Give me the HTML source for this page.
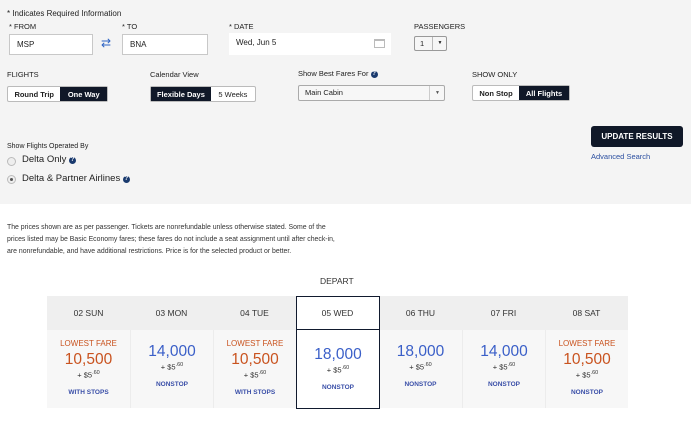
<!DOCTYPE html>
<html><head><style>
body{margin:0;width:691px;height:422px;overflow:hidden;font-family:"Liberation Sans",sans-serif;background:#fff;color:#222;position:relative}
.top{position:absolute;left:0;top:0;width:691px;height:204px;background:#f4f4f4}
.a{position:absolute;white-space:nowrap}
.s9{font-size:8px}
.inp{position:absolute;background:#fff;border:1px solid #c8c8c8;font-size:8px;box-sizing:border-box;padding-left:7px}
.tog{position:absolute;display:flex;border:1px solid #bbb;border-radius:2px;height:16px;box-sizing:border-box;font-size:7.5px;font-weight:bold;background:#fff}
.tog span{display:flex;align-items:center;justify-content:center}
.on{background:#101828;color:#fff}
.q{display:inline-block;width:7px;height:7px;border-radius:50%;background:#1a3a6e;color:#fff;font-size:6px;text-align:center;line-height:7px;vertical-align:1px;font-weight:bold}
.grid{position:absolute;left:47px;top:296px;width:581px;height:112px}
.col{position:absolute;top:0;width:83px;height:112px;text-align:center}
.hd{height:34px;line-height:34px;background:#efefef;font-size:8.5px;color:#333}
.bd{height:78px;background:#f7f7f7;border-left:1px solid #ececec;box-sizing:border-box}
.lf{color:#c9531f;font-size:8px;padding-top:9px;height:9px}
.pr{font-size:15.5px;color:#c9531f;margin-top:3px}
.pb{color:#3a5fc8}
.tx{font-size:7.5px;color:#333;margin-top:1px}
.tx sup{font-size:5.5px}
.st{font-size:6.5px;color:#3a4fa8;font-weight:bold;margin-top:9px}
.sel{position:absolute;left:296px;top:296px;width:84px;height:113px;border:1.5px solid #111a2e;box-sizing:border-box}
</style></head><body>
<div class="top"></div>
<div class="a s9" style="left:7px;top:9px">* Indicates Required Information</div>
<div class="a" style="left:9px;top:22px;font-size:7.5px">* FROM</div>
<div class="a" style="left:122px;top:22px;font-size:7.5px">* TO</div>
<div class="a" style="left:229px;top:22px;font-size:7.5px">* DATE</div>
<div class="a" style="left:414px;top:22px;font-size:7.5px">PASSENGERS</div>
<div class="inp" style="left:9px;top:34px;width:84px;height:21px;line-height:20px">MSP</div>
<div class="a" style="left:101px;top:36px;color:#2b62c4;font-size:12px">⇄</div>
<div class="inp" style="left:122px;top:34px;width:86px;height:21px;line-height:20px">BNA</div>
<div class="inp" style="left:229px;top:33px;width:162px;height:22px;line-height:20px;border:none">Wed, Jun 5
<span style="position:absolute;right:6px;top:6px;width:11px;height:9px;border:1px solid #bbb;box-sizing:border-box;border-top-width:2px"></span></div>
<div class="a" style="left:414px;top:36px;width:33px;height:15px;border:1px solid #999;border-radius:2px;background:#f6f6f6;box-sizing:border-box;font-size:7.5px"><span style="position:absolute;left:5px;top:2px">1</span><span style="position:absolute;left:17px;top:0;height:13px;border-left:1px solid #bbb;width:14px;text-align:center;font-size:5px;line-height:13px">▼</span></div>
<div class="a" style="left:7px;top:70px;font-size:7.5px">FLIGHTS</div>
<div class="a" style="left:150px;top:70px;font-size:7.5px">Calendar View</div>
<div class="a" style="left:298px;top:69px;font-size:7.5px">Show Best Fares For <span class="q">?</span></div>
<div class="a" style="left:472px;top:70px;font-size:7.5px">SHOW ONLY</div>
<div class="tog" style="left:7px;top:86px;width:101px"><span style="width:53px">Round Trip</span><span class="on" style="width:47px">One Way</span></div>
<div class="tog" style="left:150px;top:86px;width:106px"><span class="on" style="width:61px">Flexible Days</span><span style="width:45px;font-weight:normal">5 Weeks</span></div>
<div class="a" style="left:298px;top:85px;width:147px;height:16px;border:1px solid #aaa;border-radius:2px;background:#f7f7f7;box-sizing:border-box;font-size:7.5px"><span style="position:absolute;left:6px;top:2px">Main Cabin</span><span style="position:absolute;left:130px;top:0;height:14px;border-left:1px solid #ccc;width:15px;text-align:center;font-size:5px;line-height:15px;color:#555">▼</span></div>
<div class="tog" style="left:472px;top:85px;width:98px"><span style="width:47px">Non Stop</span><span class="on" style="width:51px">All Flights</span></div>
<div class="a" style="left:591px;top:126px;width:92px;height:21px;background:#101828;color:#fff;border-radius:3px;font-size:8px;font-weight:bold;text-align:center;line-height:21px">UPDATE RESULTS</div>
<div class="a" style="left:591px;top:152px;font-size:7.5px;color:#2b4fa0">Advanced Search</div>
<div class="a" style="left:7px;top:143px;font-size:7px">Show Flights Operated By</div>
<div class="a" style="left:7px;top:157px;width:7px;height:7px;border-radius:50%;border:1px solid #bbb;background:#eee"></div>
<div class="a" style="left:22px;top:154px;font-size:9.5px">Delta Only <span class="q">?</span></div>
<div class="a" style="left:7px;top:175px;width:7px;height:7px;border-radius:50%;border:1px solid #bbb;background:#eee"><div style="margin:2px;width:3px;height:3px;border-radius:50%;background:#555"></div></div>
<div class="a" style="left:22px;top:173px;font-size:9.5px">Delta &amp; Partner Airlines <span class="q">?</span></div>
<div class="a" style="left:7px;top:222px;font-size:6.9px;line-height:12px;color:#333">The prices shown are as per passenger. Tickets are nonrefundable unless otherwise stated. Some of the<br>prices listed may be Basic Economy fares; these fares do not include a seat assignment until after check-in,<br>are nonrefundable, and have additional restrictions. Price is for the selected product or better.</div>
<div class="a" style="left:320px;top:276px;font-size:8.5px;color:#333">DEPART</div>
<div class="grid">
<div class="col" style="left:0"><div class="hd">02 SUN</div><div class="bd" style="border-left:none"><div class="lf">LOWEST FARE</div><div class="pr">10,500</div><div class="tx">+ $5<sup>.60</sup></div><div class="st">WITH STOPS</div></div></div>
<div class="col" style="left:83px"><div class="hd">03 MON</div><div class="bd"><div class="lf" style="height:2px;padding-top:8px"></div><div class="pr pb">14,000</div><div class="tx">+ $5<sup>.60</sup></div><div class="st">NONSTOP</div></div></div>
<div class="col" style="left:166px"><div class="hd">04 TUE</div><div class="bd"><div class="lf">LOWEST FARE</div><div class="pr">10,500</div><div class="tx">+ $5<sup>.60</sup></div><div class="st">WITH STOPS</div></div></div>
<div class="col" style="left:249px"><div class="hd" style="background:#fff">05 WED</div><div class="bd" style="background:#fff"><div class="lf" style="height:2px;padding-top:11px"></div><div class="pr pb">18,000</div><div class="tx">+ $5<sup>.60</sup></div><div class="st">NONSTOP</div></div></div>
<div class="col" style="left:332px"><div class="hd">06 THU</div><div class="bd" style="border-left:none"><div class="lf" style="height:2px;padding-top:8px"></div><div class="pr pb">18,000</div><div class="tx">+ $5<sup>.60</sup></div><div class="st">NONSTOP</div></div></div>
<div class="col" style="left:415px"><div class="hd">07 FRI</div><div class="bd"><div class="lf" style="height:2px;padding-top:8px"></div><div class="pr pb">14,000</div><div class="tx">+ $5<sup>.60</sup></div><div class="st">NONSTOP</div></div></div>
<div class="col" style="left:498px"><div class="hd">08 SAT</div><div class="bd"><div class="lf">LOWEST FARE</div><div class="pr">10,500</div><div class="tx">+ $5<sup>.60</sup></div><div class="st">NONSTOP</div></div></div>
</div>
<div class="sel"><div style="height:32px;border-bottom:1.5px solid #111a2e"></div></div>
</body></html>
